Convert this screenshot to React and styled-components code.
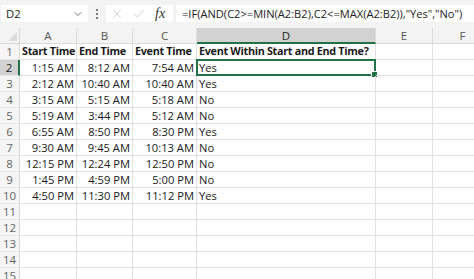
import styled, { createGlobalStyle } from "styled-components";
import { ChevronDown, X, Check } from "lucide-react";

const GlobalStyle = createGlobalStyle`
  html, body {
    margin: 0;
    padding: 0;
    background: #ffffff;
    overflow: hidden;
  }
  body {
    font-family: "Open Sans", "Liberation Sans", sans-serif;
  }
`;

const COLS = [
  { key: "A", width: 57 },
  { key: "B", width: 56 },
  { key: "C", width: 64 },
  { key: "D", width: 179 },
  { key: "E", width: 57 },
  { key: "F", width: 60 },
];

const ROWS = [
  ["Start Time", "End Time", "Event Time", "Event Within Start and End Time?"],
  ["1:15 AM", "8:12 AM", "7:54 AM", "Yes"],
  ["2:12 AM", "10:40 AM", "10:40 AM", "Yes"],
  ["3:15 AM", "5:15 AM", "5:18 AM", "No"],
  ["5:19 AM", "3:44 PM", "5:12 AM", "No"],
  ["6:55 AM", "8:50 PM", "8:30 PM", "Yes"],
  ["9:30 AM", "9:45 AM", "10:13 AM", "No"],
  ["12:15 PM", "12:24 PM", "12:50 PM", "No"],
  ["1:45 PM", "4:59 PM", "5:00 PM", "No"],
  ["4:50 PM", "11:30 PM", "11:12 PM", "Yes"],
  [],
  [],
  [],
  [],
  [],
];

const Page = styled.div`
  width: 474px;
  height: 279px;
  background: #f3f3f3;
  display: flex;
  flex-direction: column;
  overflow: hidden;
`;

const FormulaBar = styled.div`
  flex-shrink: 0;
  height: 28px;
  display: flex;
  align-items: flex-start;
  padding-top: 5px;
  box-sizing: border-box;
`;

const NameBox = styled.div`
  width: 87px;
  height: 17px;
  margin-left: 1px;
  background: #ffffff;
  display: flex;
  align-items: center;
  justify-content: space-between;
  padding: 0 4px 0 5px;
  box-sizing: border-box;
  font-size: 11.3px;
  color: #222;
`;

const Dots = styled.div`
  width: 18px;
  height: 17px;
  display: flex;
  flex-direction: column;
  align-items: center;
  justify-content: center;
  gap: 2px;
  span {
    width: 2px;
    height: 2px;
    background: #555;
    border-radius: 1px;
  }
`;

const IconBox = styled.div`
  width: 67px;
  height: 17px;
  background: #ffffff;
  display: flex;
  align-items: center;
  gap: 8px;
  padding-left: 4px;
  box-sizing: border-box;
`;

const Fx = styled.span`
  font-family: "Liberation Serif", "DejaVu Serif", serif;
  font-style: italic;
  font-size: 14px;
  color: #333;
  margin-left: 1px;
`;

const FormulaInput = styled.div`
  flex: 1;
  height: 17px;
  margin-left: 3px;
  background: #ffffff;
  padding-left: 6px;
  display: flex;
  align-items: center;
  font-size: 11.1px;
  color: #222;
  white-space: nowrap;
`;

const Grid = styled.div`
  display: grid;
  grid-template-columns: 20px ${COLS.map((c) => c.width + "px").join(" ")};
  grid-template-rows: 16px;
  grid-auto-rows: 16px;
  background: #ffffff;
`;

const Corner = styled.div`
  background: #f3f3f3;
  border-right: 1px solid #d9d9d9;
  border-bottom: 1px solid #d9d9d9;
  box-sizing: border-box;
  position: relative;
  &::after {
    content: "";
    position: absolute;
    right: 2px;
    bottom: 2px;
    border-left: 9px solid transparent;
    border-bottom: 9px solid #dcdcdc;
  }
`;

const ColHead = styled.div`
  background: ${(p) => (p.$active ? "#d2d2d2" : "#f3f3f3")};
  border-right: 1px solid #dcdcdc;
  border-bottom: ${(p) => (p.$active ? "2px solid #217346" : "1px solid #d9d9d9")};
  box-sizing: border-box;
  font-size: 11.5px;
  color: ${(p) => (p.$active ? "#222" : "#555")};
  display: flex;
  align-items: center;
  justify-content: center;
`;

const RowHead = styled.div`
  background: ${(p) => (p.$active ? "#d2d2d2" : "#f5f5f5")};
  border-right: ${(p) => (p.$active ? "2px solid #217346" : "1px solid #d9d9d9")};
  border-bottom: 1px solid #e6e6e6;
  box-sizing: border-box;
  font-size: 11.5px;
  color: ${(p) => (p.$active ? "#222" : "#666")};
  display: flex;
  align-items: center;
  justify-content: center;
  line-height: 1;
`;

const Cell = styled.div`
  border-right: 1px solid #e1e1e1;
  border-bottom: 1px solid #e1e1e1;
  box-sizing: border-box;
  font-size: ${(p) => (p.$bold ? "10.8px" : "11.2px")};
  font-weight: ${(p) => (p.$bold ? 700 : 400)};
  letter-spacing: ${(p) => (p.$bold ? "-0.3px" : "0")};
  color: #1a1a1a;
  display: flex;
  align-items: center;
  justify-content: ${(p) => (p.$right ? "flex-end" : "flex-start")};
  padding: 0 2px;
  white-space: nowrap;
  overflow: visible;
  position: relative;
  line-height: 1;
`;

const Selection = styled.div`
  position: absolute;
  inset: -1px -1px -1px -1px;
  border: 2px solid #217346;
  pointer-events: none;
  &::after {
    content: "";
    position: absolute;
    right: -4px;
    bottom: -4px;
    width: 5px;
    height: 5px;
    background: #217346;
    border: 1px solid #fff;
  }
`;

export default function App() {
  return (
    <Page>
      <GlobalStyle />
      <FormulaBar>
        <NameBox>
          <span>D2</span>
          <ChevronDown size={12} color="#444" strokeWidth={1.5} />
        </NameBox>
        <Dots>
          <span />
          <span />
          <span />
        </Dots>
        <IconBox>
          <X size={14} color="#b5b5b5" strokeWidth={1.1} />
          <Check size={14} color="#b5b5b5" strokeWidth={1.1} />
          <Fx>fx</Fx>
        </IconBox>
        <FormulaInput>
          =IF(AND(C2&gt;=MIN(A2:B2),C2&lt;=MAX(A2:B2)),"Yes","No")
        </FormulaInput>
      </FormulaBar>
      <Grid>
        <Corner />
        {COLS.map((c) => (
          <ColHead key={c.key} $active={c.key === "D"}>
            {c.key}
          </ColHead>
        ))}
        {ROWS.map((row, i) => (
          <Row key={i} index={i} row={row} />
        ))}
      </Grid>
    </Page>
  );
}

function Row({ index, row }) {
  const n = index + 1;
  return (
    <>
      <RowHead $active={n === 2}>{n}</RowHead>
      {COLS.map((c, ci) => {
        const val = row[ci] || "";
        const header = n === 1;
        return (
          <Cell key={c.key} $bold={header} $right={!header && ci < 3}>
            {val}
            {n === 2 && c.key === "D" && <Selection />}
          </Cell>
        );
      })}
    </>
  );
}
